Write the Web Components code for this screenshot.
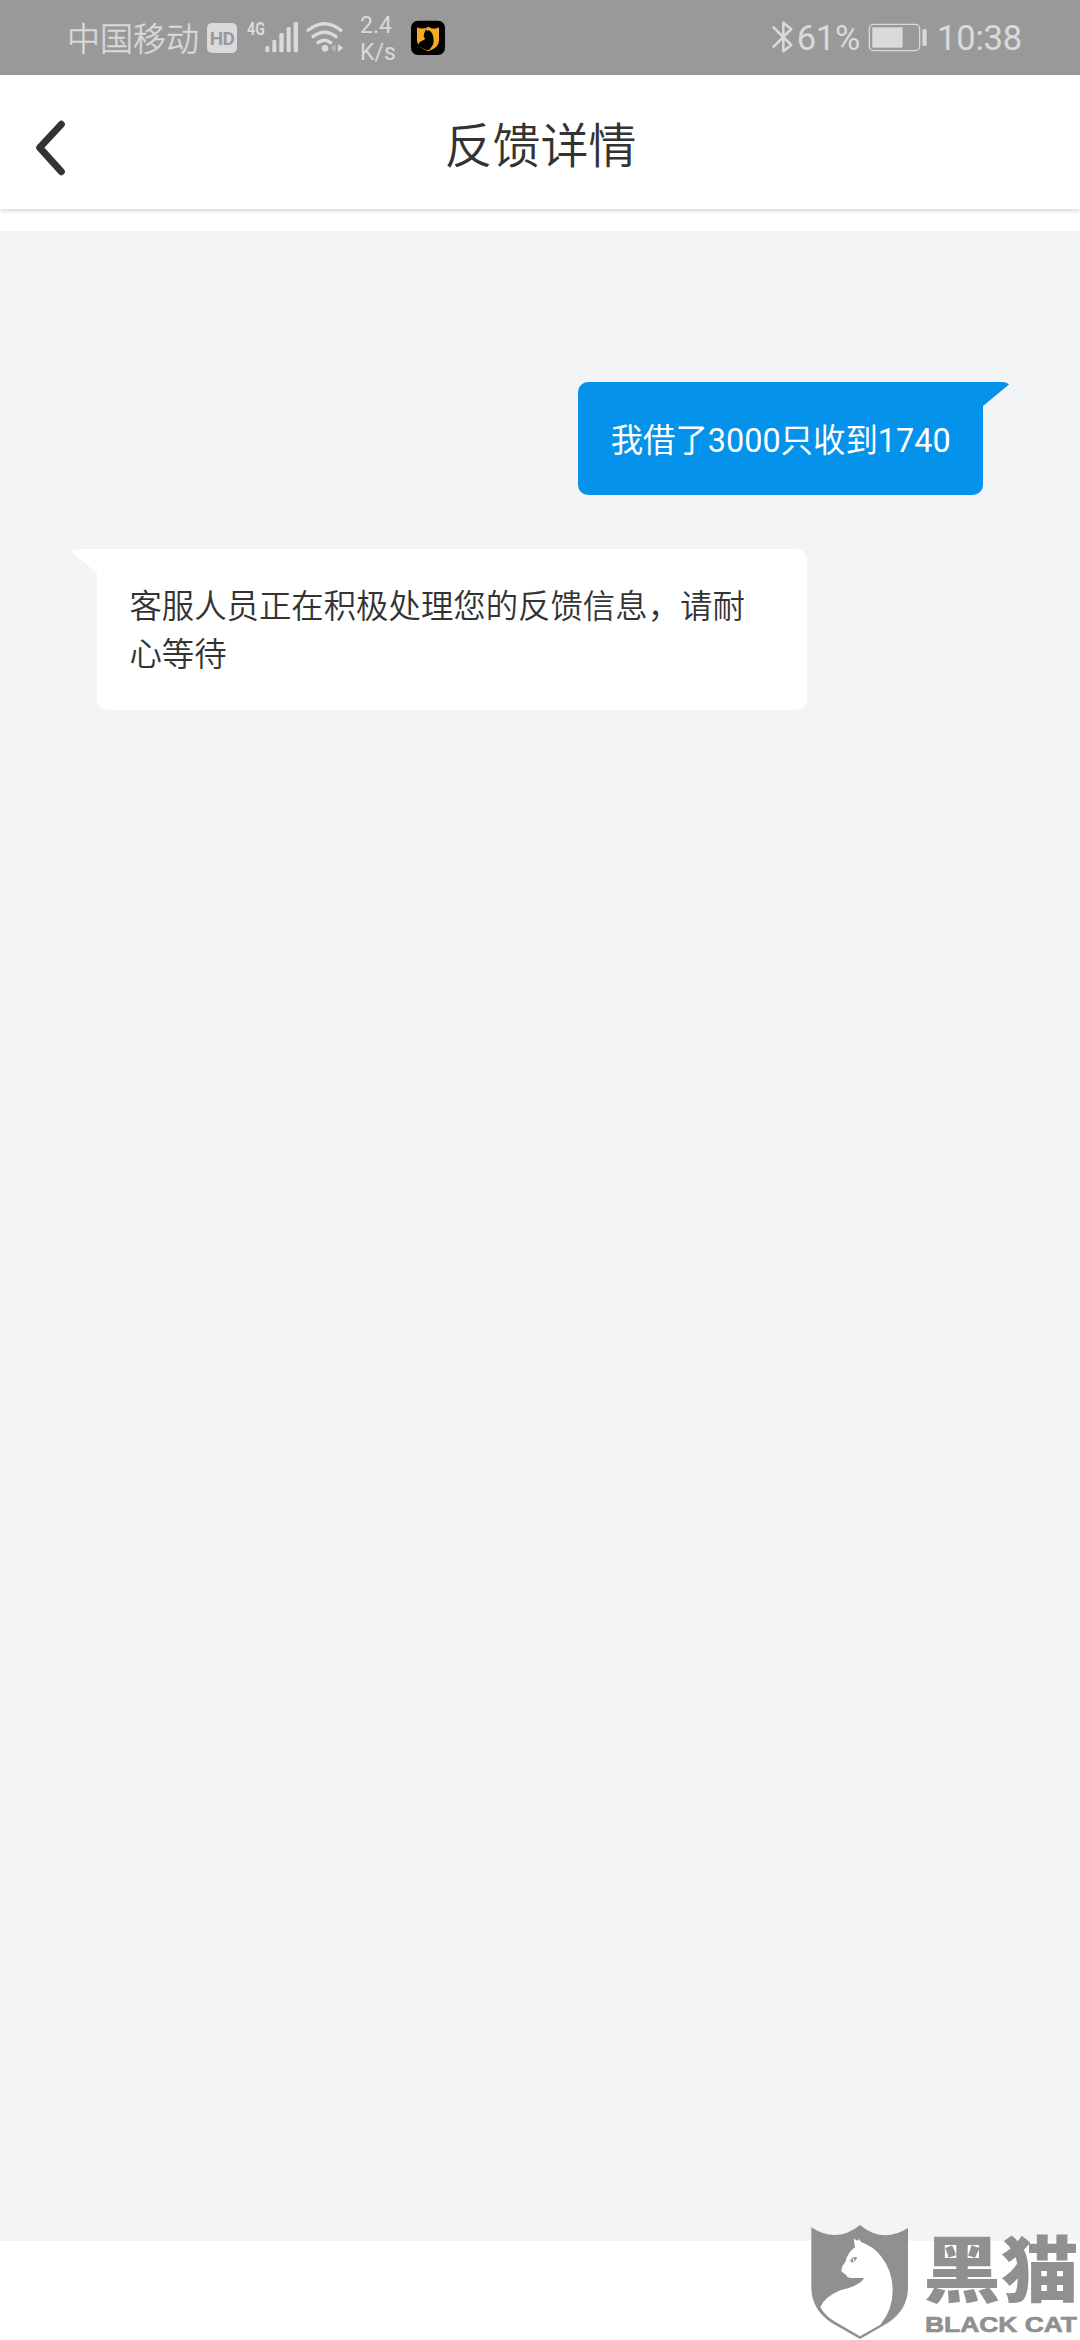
<!DOCTYPE html>
<html lang="zh-CN">
<head>
<meta charset="utf-8">
<title>反馈详情</title>
<style>
html,body{margin:0;padding:0}
body{width:1080px;height:2340px;overflow:hidden;background:#fff;font-family:Roboto,"Noto Sans CJK SC",sans-serif}
</style>
</head>
<body>
<feedback-page></feedback-page>
<script>
function define(name, html) {
  const t = document.createElement('template');
  t.innerHTML = html;
  customElements.define(name, class extends HTMLElement {
    constructor() {
      super();
      this.attachShadow({mode: 'open'}).appendChild(t.content.cloneNode(true));
    }
  });
}

define('status-bar', `
<style>
:host{display:flex;justify-content:space-between;align-items:flex-start;box-sizing:border-box;height:75px;background:#999;color:#dadada;padding:0 58px 0 67px;white-space:nowrap}
.side{display:flex;height:75px}
svg{display:block;flex:none}
.carrier{width:132px;font-size:33px;line-height:79px;font-weight:300;-webkit-text-stroke:.5px #dadada}
.speed{display:flex;flex-direction:column;width:36px;margin:12px 0 0 15px;font-size:23px;line-height:27px}
.num{font-size:34.5px;line-height:77px;letter-spacing:-.2px}
.hd{box-sizing:border-box;width:30px;height:30px;margin:23px 0 0 8px;border-radius:5px;background:#dadada;color:#999;font:bold 19px/31px Roboto,sans-serif;text-align:center;letter-spacing:-.6px}
.net{width:18px;margin:20px 0 0 10px;font:bold 19px/18px Roboto,sans-serif;display:block}
.net span{display:inline-block;transform:scaleX(.75);transform-origin:0 0}
</style>
<div class="side">
  <span class="carrier">中国移动</span>
  <span class="hd">HD</span>
  <span class="net"><span>4G</span></span>
  <svg width="34" height="75" viewBox="73 0 102 225" fill="#dadada"><rect x="74" y="138" width="12" height="19" rx="5"/><rect x="95" y="120" width="12" height="37" rx="4"/><rect x="116" y="99" width="13" height="58" rx="4"/><rect x="138" y="81" width="12" height="76" rx="4"/><rect x="159" y="66" width="13" height="91" rx="4"/></svg>
  <svg style="margin-left:6px" width="40" height="75" viewBox="195 0 120 225"><g fill="none" stroke="#dadada" stroke-width="10" stroke-linecap="round"><path d="M204 91Q253 51 303 91"/><path d="M219 110Q253 83 288 110"/><path d="M234 128Q253 113 272 128"/></g><circle cx="255" cy="145" r="10" fill="#dadada"/><path d="M271 144L287 132V156Z" fill="#b4b4b4"/><path d="M294 132L310 143L294 156Z" fill="#dadada"/></svg>
  <div class="speed"><span>2.4</span><span>K/s</span></div>
  <svg style="margin-left:14px" width="36" height="75" viewBox="510 0 108 225"><rect x="513" y="62" width="102" height="103" rx="21"/><path d="M531 82Q549 90 565 80Q581 91 597 82V123Q596 143 565 154Q533 143 531 123Z" fill="#f7a824"/><path d="M559 88L554 96Q551 104 551 110L556 116Q553 120 543 124Q534 130 534 136Q547 148 565 151Q579 140 581 125Q582 97 565 90L562 94Z" fill="#000"/></svg>
</div>
<div class="side">
  <svg width="26" height="75" viewBox="57 0 78 225" fill="none" stroke="#dadada" stroke-width="7.5" stroke-linejoin="round"><path d="M62 80L118 135L94 154V68L118 87L62 143"/></svg>
  <span class="num">61%</span>
  <svg style="margin-left:8px" width="60" height="75" viewBox="352 0 180 225"><rect x="356" y="73" width="151" height="79" rx="13" fill="none" stroke="#dadada" stroke-width="4"/><rect x="365" y="82" width="91" height="61" fill="#dadada"/><rect x="515" y="87" width="13" height="51" rx="5" fill="#dadada"/></svg>
  <span class="num" style="margin-left:9px">10:38</span>
</div>`);

define('nav-bar', `
<style>
:host{display:grid;grid-template-columns:100px 1fr 100px;align-items:center;height:134px;background:#fff;box-shadow:0 2px 4px rgba(0,0,0,.16);color:#333}
h1{margin:0;font-size:48px;font-weight:350;line-height:72px;text-align:center;padding:10px 0 0 1px}
svg{display:block}
</style>
<svg width="100" height="134" viewBox="0 15 300 402" fill="none" stroke="#333"><path d="M184 163L119 233L184 305" stroke-linecap="round" stroke-linejoin="round" stroke-width="21"/></svg>
<h1><slot></slot></h1>`);

define('chat-bubble', `
<style>
:host{display:flex;width:fit-content;max-width:710px;box-sizing:border-box;position:relative;background:var(--fill,#fff);color:var(--ink,#333);border-radius:10px;padding:33.4px 32.4px 30.4px;font-size:32.4px;line-height:48.6px}
:host([side=right]){--fill:#0492ea;--ink:#fff;align-self:flex-end;border-top-right-radius:0;padding:35.4px 32.4px 29.4px}
:host([side=left]){align-self:flex-start;border-top-left-radius:0;font-weight:350}
svg{position:absolute;top:0;width:28px;height:25px;fill:var(--fill,#fff)}
:host([side=right]) svg{left:calc(100% - 1px)}
:host([side=left]) svg{right:calc(100% - 1px);transform:scaleX(-1)}
</style>
<span><slot></slot></span>
<svg viewBox="0 0 28 25"><path d="M0 0H21Q25 0 27 2.5L1 24H0Z"/></svg>`);

define('cat-watermark', `
<style>
:host{display:block;position:absolute;left:790px;top:2210px;width:290px;height:130px}
svg{display:block;overflow:hidden}
</style>
<svg width="290" height="130" viewBox="0 0 870 390" fill="#918f90">
<path d="M64 52Q140 102 210 45Q279 102 354 54V232Q354 300 292 340L210 387L127 340Q64 300 64 232Z"/>
<path d="M191 86L203 92L207 87L213 96Q249 108 273 139Q307 181 308 239Q309 298 271 344L210 379L133 334Q105 318 91 291Q102 262 151 241Q213 226 222 204H180Q172 204 169 196L154 184L157 169L167 154Q173 127 195 112Z" fill="#fff"/>
<path d="M181 151Q187 140 201 141Q198 156 187 157Q180 159 181 151Z"/><path d="M190 143L188 155L194 151Z" fill="#fff"/>
<text x="400" y="258" font-size="216" font-family="Noto Sans CJK SC" font-weight="900" textLength="466" lengthAdjust="spacingAndGlyphs">黑猫</text>
<text x="405" y="367" font-family="Liberation Sans,sans-serif" font-weight="700" font-size="67" stroke="#918f90" stroke-width="2" textLength="456" lengthAdjust="spacingAndGlyphs">BLACK CAT</text>
</svg>`);

define('feedback-page', `
<style>
:host{display:flex;flex-direction:column;position:relative;width:1080px;height:2340px;overflow:hidden;background:#fff}
main{display:flex;flex-direction:column;gap:54px;box-sizing:border-box;height:2010px;margin-top:22px;padding:151px 97px 0;background:#f2f4f6}
</style>
<status-bar></status-bar>
<nav-bar>反馈详情</nav-bar>
<main>
<chat-bubble side="right">我借了3000只收到1740</chat-bubble>
<chat-bubble side="left">客服人员正在积极处理您的反馈信息，请耐心等待</chat-bubble>
</main>
<cat-watermark></cat-watermark>`);
</script>
</body>
</html>
